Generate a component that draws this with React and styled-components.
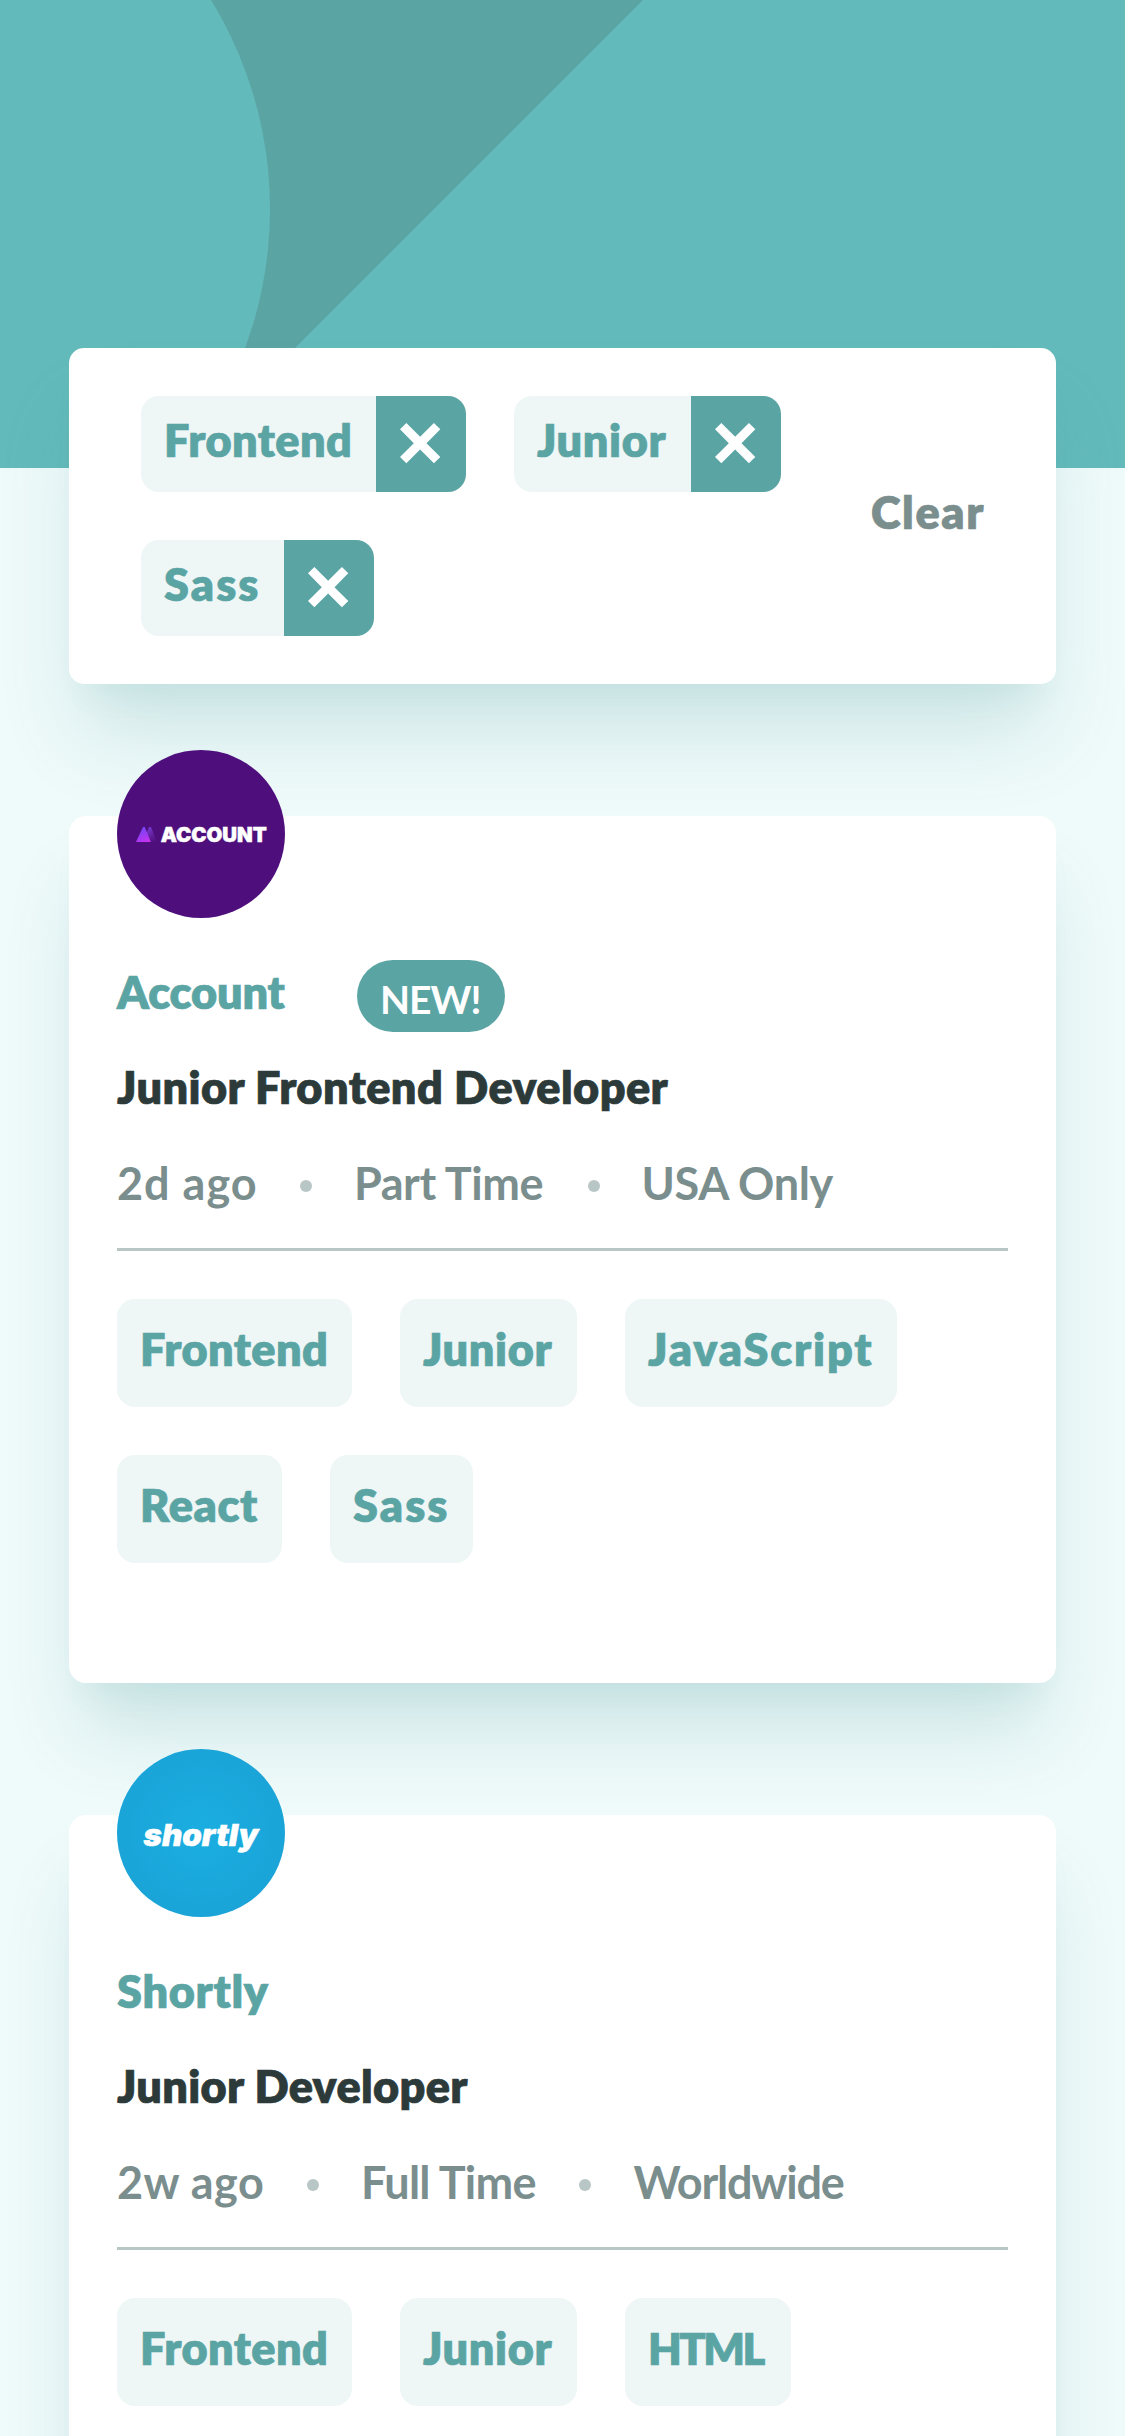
import React from "react";
import styled, { createGlobalStyle } from "styled-components";

const color = {
  primary: "#5ba4a4",
  header: "#63baba",
  page: "#effafa",
  tablet: "#eef6f6",
  muted: "#7b8e8e",
  line: "#b9c6c6",
  ink: "#2c3a3a",
};

const GlobalStyle = createGlobalStyle`
  *, *::before, *::after { box-sizing: border-box; }
  body {
    margin: 0;
    background: ${color.page};
    font-family: Lato, "Open Sans", sans-serif;
    font-size: 45px;
    line-height: 54px;
  }
  button {
    font: inherit;
    border: 0;
    padding: 0;
    background: none;
    cursor: pointer;
  }
`;

const Page = styled.div`
  width: 100%;
  height: 2436px;
  overflow: hidden;
  background: ${color.page};
`;

const Header = styled.header`
  height: 468px;
  background: ${color.header};
`;

const HeaderArt = styled.svg`
  display: block;
`;

const Main = styled.main`
  display: flex;
  flex-direction: column;
  gap: 132px;
  margin-top: -120px;
  padding: 0 69px;
`;

const Panel = styled.section`
  background: #fff;
  border-radius: 17px;
  box-shadow:
    0 60px 75px -15px rgba(91, 164, 164, 0.24),
    0 24px 30px -18px rgba(91, 164, 164, 0.11);
`;

const FilterPanel = styled(Panel)`
  display: flex;
  align-items: center;
  padding: 48px 72px;
  border-radius: 15px;
`;

const FilterList = styled.div`
  flex: 1;
  display: flex;
  flex-wrap: wrap;
  gap: 48px;
`;

const FilterTag = styled.div`
  display: flex;
  width: ${(p) => p.$width + 90}px;
  height: 96px;
  border-radius: 18px;
  overflow: hidden;
  background: ${color.tablet};
`;

const FilterLabel = styled.span`
  flex: 1;
  padding: 17px 0 0 23px;
  font-weight: 800;
  white-space: nowrap;
  letter-spacing: ${(p) => p.$tracking}px;
  -webkit-text-stroke: 0.7px currentColor;
  color: ${color.primary};
`;

const RemoveButton = styled.button`
  display: flex;
  align-items: center;
  justify-content: center;
  width: 90px;
  height: 96px;
  background: ${color.primary};
`;

const ClearButton = styled.button`
  width: 113px;
  padding-bottom: 9px;
  font-weight: 800;
  letter-spacing: 1.6px;
  white-space: nowrap;
  -webkit-text-stroke: 0.7px currentColor;
  color: ${color.muted};
`;

const JobCard = styled(Panel)`
  display: flex;
  flex-direction: column;
  padding: 0 48px 120px;
`;

const Logo = styled.svg`
  display: block;
  width: 168px;
  height: 168px;
  margin-top: -66px;
`;

const CompanyRow = styled.div`
  display: flex;
  align-items: flex-start;
  gap: 72px;
  height: 72px;
  margin-top: 42px;
`;

const Company = styled.h2`
  width: 168px;
  margin: 0;
  padding-top: 5px;
  font-size: 45px;
  font-weight: 800;
  white-space: nowrap;
  letter-spacing: ${(p) => p.$tracking}px;
  -webkit-text-stroke: 0.7px currentColor;
  color: ${color.primary};
`;

const NewBadge = styled.span`
  width: 148px;
  height: 72px;
  padding: 16px 0 0 23px;
  border-radius: 36px;
  background: ${color.primary};
  color: #fff;
  font-size: 39px;
  font-weight: 700;
  line-height: 47px;
  letter-spacing: -1px;
`;

const Title = styled.h1`
  margin: 28px 0 0;
  font-size: 45px;
  font-weight: 800;
  letter-spacing: ${(p) => p.$tracking}px;
  -webkit-text-stroke: 0.7px currentColor;
  color: ${color.ink};
`;

const Meta = styled.div`
  display: flex;
  align-items: center;
  gap: 42px;
  margin-top: 42px;
  color: ${color.muted};
`;

const MetaItem = styled.span`
  width: ${(p) => p.$width}px;
  font-weight: 700;
  white-space: nowrap;
  letter-spacing: ${(p) => p.$tracking}px;
`;

const Dot = styled.i`
  width: 12px;
  height: 12px;
  margin-top: 5px;
  border-radius: 50%;
  background: ${color.line};
`;

const Divider = styled.hr`
  width: 100%;
  height: 3px;
  margin: 38px 0 48px;
  border: 0;
  background: ${color.line};
`;

const TagList = styled.div`
  display: flex;
  flex-wrap: wrap;
  gap: 48px;
`;

const Tag = styled.button`
  width: ${(p) => p.$width}px;
  height: 108px;
  padding: 23px 0 31px 23px;
  border-radius: 18px;
  background: ${color.tablet};
  color: ${color.primary};
  font-size: ${(p) => p.$size || 45}px;
  font-weight: 800;
  text-align: left;
  white-space: nowrap;
  letter-spacing: ${(p) => p.$tracking}px;
  -webkit-text-stroke: 0.7px currentColor;
`;

const RemoveIcon = () => (
  <svg width="42" height="42" viewBox="0 0 14 14" aria-hidden="true">
    <path
      fill="#fff"
      d="M11.314 0l2.121 2.121-4.596 4.596 4.596 4.597-2.121 2.121-4.597-4.596-4.596 4.596L0 11.314l4.596-4.597L0 2.121 2.121 0l4.596 4.596L11.314 0z"
    />
  </svg>
);

const AccountLogo = () => (
  <Logo viewBox="0 0 168 168" role="img">
    <defs>
      <linearGradient id="peak" x1="0.3" y1="0" x2="0.75" y2="1">
        <stop offset="0" stopColor="#6f45f5" />
        <stop offset="1" stopColor="#c433f0" />
      </linearGradient>
      <linearGradient id="peakBack" x1="0.3" y1="0" x2="0.9" y2="1">
        <stop offset="0" stopColor="#7a3fe0" />
        <stop offset="1" stopColor="#7a2fb0" stopOpacity="0" />
      </linearGradient>
    </defs>
    <circle cx="84" cy="84" r="84" fill="#4e0f7d" />
    <path d="M32.2 77h1.8l6 15H25.5z" fill="url(#peakBack)" />
    <path d="M26 77h1.8l6 15H19z" fill="url(#peak)" />
    <text
      x="43.7"
      y="91.5"
      fill="#fff"
      stroke="#fff"
      strokeWidth="0.5"
      fontFamily="Inter, sans-serif"
      fontWeight="900"
      fontSize="20"
      textLength="106"
      lengthAdjust="spacingAndGlyphs"
    >
      ACCOUNT
    </text>
  </Logo>
);

const ShortlyLogo = () => (
  <Logo viewBox="0 0 168 168" role="img">
    <defs>
      <radialGradient id="sky">
        <stop offset="0" stopColor="#1baee1" />
        <stop offset="1" stopColor="#1aa4d8" />
      </radialGradient>
    </defs>
    <circle cx="84" cy="84" r="84" fill="url(#sky)" />
    <text
      x="26.5"
      y="96.7"
      fill="#fff"
      stroke="#fff"
      strokeWidth="0.5"
      fontFamily="Inter, sans-serif"
      fontWeight="900"
      fontStyle="italic"
      fontSize="30"
      textLength="115"
      lengthAdjust="spacingAndGlyphs"
    >
      shortly
    </text>
  </Logo>
);

const filters = [
  { label: "Frontend", width: 235, tracking: 0.45 },
  { label: "Junior", width: 177, tracking: 0.6 },
  { label: "Sass", width: 143, tracking: 2.1 },
];

const jobs = [
  {
    logo: AccountLogo,
    company: { label: "Account", tracking: -0.15 },
    isNew: true,
    title: { label: "Junior Frontend Developer", tracking: 0.42 },
    meta: [
      { label: "2d ago", width: 141, tracking: 1 },
      { label: "Part Time", width: 191.6, tracking: -0.45 },
      { label: "USA Only", width: 195, tracking: -0.4 },
    ],
    tags: [
      { label: "Frontend", width: 235, tracking: 0.45 },
      { label: "Junior", width: 177, tracking: 0.6 },
      { label: "JavaScript", width: 272, tracking: 1.85 },
      { label: "React", width: 165, tracking: 0.65 },
      { label: "Sass", width: 143, tracking: 2.1 },
    ],
  },
  {
    logo: ShortlyLogo,
    company: { label: "Shortly", tracking: 0.7 },
    title: { label: "Junior Developer", tracking: 0.33 },
    meta: [
      { label: "2w ago", width: 148, tracking: 0.5 },
      { label: "Full Time", width: 176.4, tracking: -0.7 },
      { label: "Worldwide", width: 212, tracking: -1.2 },
    ],
    tags: [
      { label: "Frontend", width: 235, tracking: 0.45 },
      { label: "Junior", width: 177, tracking: 0.6 },
      { label: "HTML", width: 166, tracking: -2.5, size: 43.5 },
    ],
  },
];

const Job = ({ job }) => {
  const CompanyLogo = job.logo;
  return (
    <JobCard>
      <CompanyLogo />
      <CompanyRow>
        <Company $tracking={job.company.tracking}>{job.company.label}</Company>
        {job.isNew && <NewBadge>NEW!</NewBadge>}
      </CompanyRow>
      <Title $tracking={job.title.tracking}>{job.title.label}</Title>
      <Meta>
        {job.meta.map((item, i) => (
          <React.Fragment key={item.label}>
            {i > 0 && <Dot />}
            <MetaItem $width={item.width} $tracking={item.tracking}>
              {item.label}
            </MetaItem>
          </React.Fragment>
        ))}
      </Meta>
      <Divider />
      <TagList>
        {job.tags.map((tag) => (
          <Tag key={tag.label} $width={tag.width} $tracking={tag.tracking} $size={tag.size}>
            {tag.label}
          </Tag>
        ))}
      </TagList>
    </JobCard>
  );
};

export default function App() {
  return (
    <Page>
      <GlobalStyle />
      <Header>
        <HeaderArt width="1125" height="468" viewBox="0 0 1125 468" aria-hidden="true">
          <path d="M0 0H643L175 468H0z" fill={color.primary} />
          <circle cx="-130" cy="209" r="400" fill={color.header} />
        </HeaderArt>
      </Header>
      <Main>
        <FilterPanel>
          <FilterList>
            {filters.map((f) => (
              <FilterTag key={f.label} $width={f.width}>
                <FilterLabel $tracking={f.tracking}>{f.label}</FilterLabel>
                <RemoveButton aria-label={`Remove ${f.label}`}>
                  <RemoveIcon />
                </RemoveButton>
              </FilterTag>
            ))}
          </FilterList>
          <ClearButton>Clear</ClearButton>
        </FilterPanel>
        {jobs.map((job) => (
          <Job key={job.company.label} job={job} />
        ))}
      </Main>
    </Page>
  );
}
